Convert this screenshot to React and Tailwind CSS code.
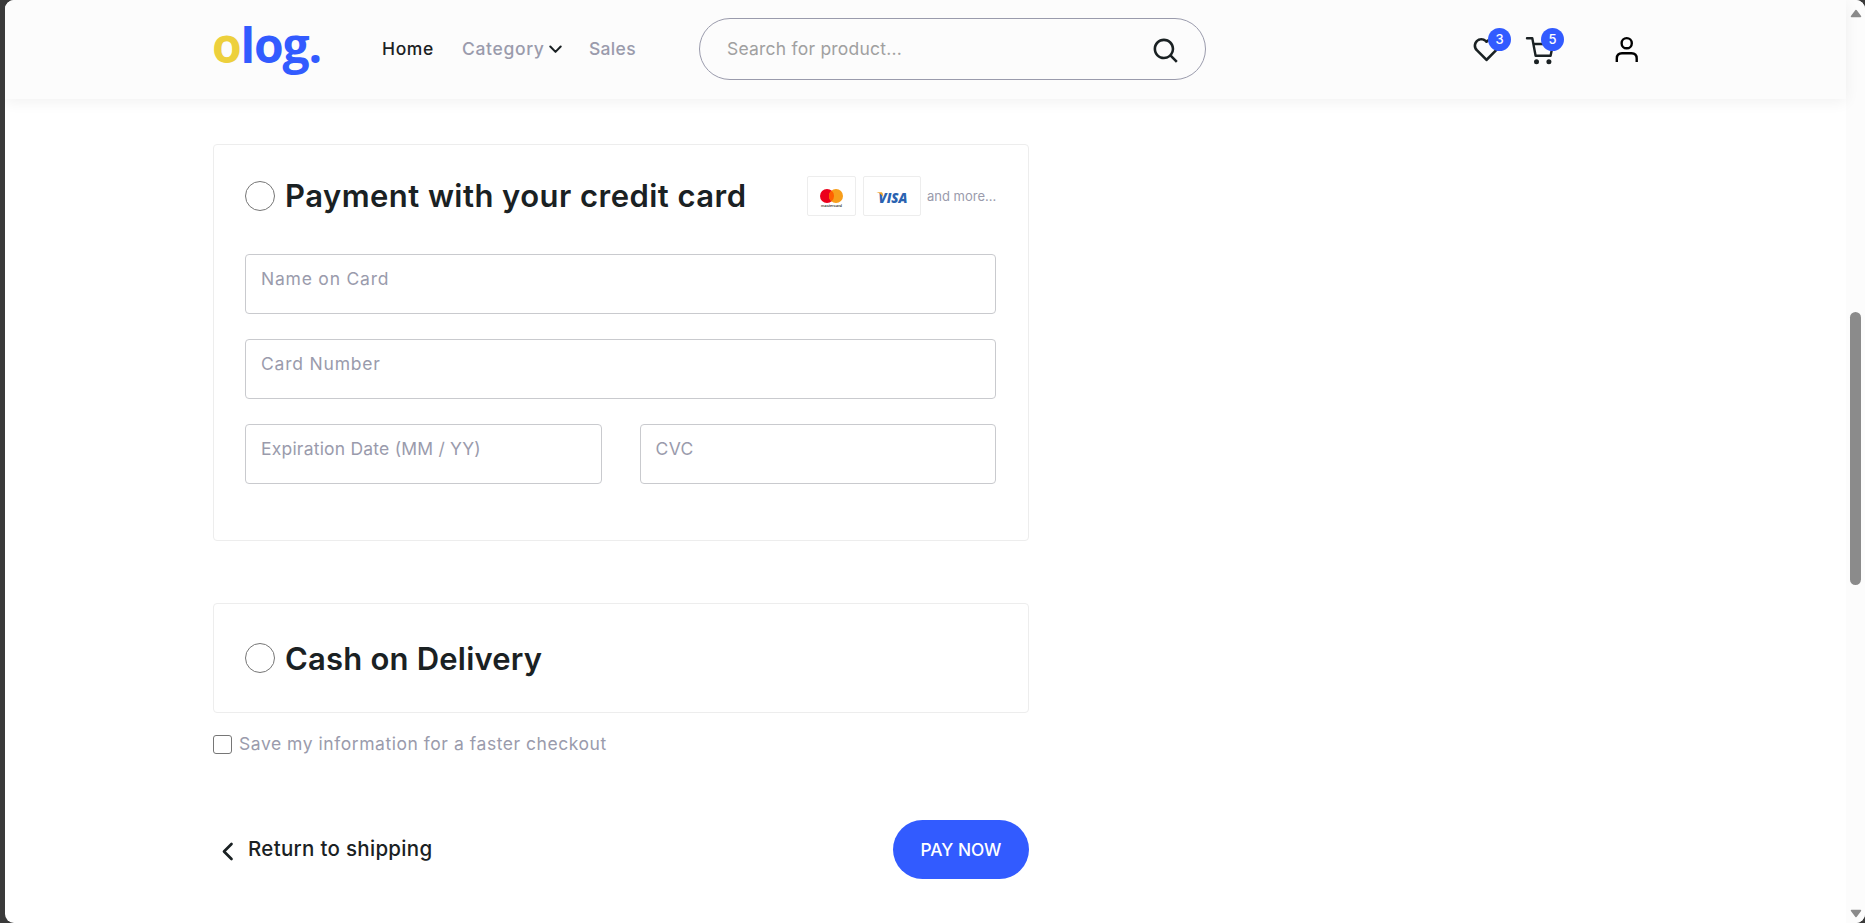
import { BiSearch, BiHeart } from 'react-icons/bi';

function CartIcon() {
  return (
    <svg width="31" height="31" viewBox="0 0 31 31" fill="none" stroke="#1a2123" strokeWidth="2.400" strokeLinejoin="round" strokeLinecap="round">
      <path d="M3 4.200H8.300L11.600 21.700H26.600L29 10H9.500" />
      <circle cx="12.500" cy="27.700" r="2.500" fill="#1a2123" stroke="none" />
      <circle cx="24.900" cy="27.700" r="2.500" fill="#1a2123" stroke="none" />
    </svg>
  );
}

function UserIcon() {
  return (
    <svg width="30" height="31" viewBox="0 0 30 31" fill="none" stroke="#000" strokeWidth="2.400">
      <circle cx="14.700" cy="9.200" r="5.100" />
      <path d="M4.800 28V24.500Q4.800 19.200 10 19.200H19.500Q24.700 19.200 24.700 24.500V28" />
    </svg>
  );
}

function Header() {
  return (
    <header className="relative z-10 flex h-[99px] shrink-0 items-center bg-[#fcfcfc] pl-[207px] pr-[204px] shadow-[0_3px_14px_rgba(0,0,0,0.06)]">
      <a className="w-[107px] pb-[9px] font-['Open_Sans',sans-serif] text-[48px] leading-[60px] font-bold tracking-[-1.2px] text-[#325bff]">
        <span className="text-[#edd03c]">o</span>log.
      </a>
      <nav className="ml-[63px] flex items-center pb-[2px] text-[17.5px] leading-6 font-medium text-[#9a9bac]">
        <a className="w-[80px] tracking-[0.6px] text-[#1a2123]">Home</a>
        <a className="flex w-[127px] items-center tracking-[0.65px]">
          Category
          <svg className="mt-[2px] ml-[4px] shrink-0" width="13" height="9" viewBox="0 0 13 9" fill="none">
            <path d="M1.3 1.500L6.500 6.900L11.700 1.500" stroke="#1a2123" strokeWidth="2" strokeLinecap="round" strokeLinejoin="round" />
          </svg>
        </a>
        <a className="w-[110px] tracking-[0.3px]">Sales</a>
      </nav>
      <div className="mb-[1px] flex h-[62px] w-[507px] items-center justify-between rounded-full border border-[#9a9bac] pr-[23px] pl-[27px]">
        <span className="pt-[1px] text-[17.5px] tracking-[0.22px] text-[#a0a0a0]">Search for product...</span>
        <BiSearch className="mt-[4px] text-[31px] text-[#1a2123]" />
      </div>
      <div className="ml-auto flex items-center text-[31px] text-[#1a2123]">
        <span className="relative mr-[22px]">
          <BiHeart />
          <Badge>3</Badge>
        </span>
        <span className="relative mr-[57px]">
          <CartIcon />
          <Badge>5</Badge>
        </span>
        <UserIcon />
      </div>
    </header>
  );
}

function Badge({ children }) {
  return (
    <span className="absolute -top-[6px] left-[17px] flex size-[23px] items-center justify-center rounded-full bg-[#325bff] text-[13px] font-medium text-white">
      {children}
    </span>
  );
}

function Radio() {
  return <span className="mr-[10px] size-[30px] shrink-0 rounded-full border border-[#767676]" />;
}

function Field({ label, className = '' }) {
  return (
    <div className={`h-[60px] flex-1 rounded-[4px] border border-[#c9cace] pt-[12px] pl-[15px] text-[17.5px] leading-6 text-[#9a9bac] ${className}`}>
      {label}
    </div>
  );
}

function CardLogos() {
  return (
    <div className="-mr-[1px] ml-auto flex items-center">
      <div className="flex h-10 w-[49px] items-center justify-center rounded-[2px] border border-[#ededed]">
        <svg width="25" height="24" viewBox="0 0 25 24">
          <circle cx="8" cy="12" r="7" fill="#eb001b" />
          <circle cx="17" cy="12" r="7" fill="#f79e1b" />
          <path d="M12.5 6.600a7 7 0 0 1 0 10.800a7 7 0 0 1 0-10.800z" fill="#ff5f00" />
          <text x="2" y="22.600" textLength="21" lengthAdjust="spacingAndGlyphs" fontSize="3.600" fontWeight="500" fontFamily="Inter" fill="#231f20">mastercard</text>
        </svg>
      </div>
      <div className="ml-[7px] flex h-10 w-[58px] items-center justify-center rounded-[2px] border border-[#ededed]">
        <svg className="mt-[2px] shrink-0" width="38" height="20" viewBox="0 0 38 20">
          <text x="5.500" y="15.500" textLength="29" lengthAdjust="spacingAndGlyphs" fontSize="14" fontWeight="800" fontStyle="italic" fontFamily="Open Sans" fill="#2a62b0">VISA</text>
          <path d="M3.500 5.300h4.500c1 0 1.400.4 1.600 1.200l.8 3.800C9 7.800 6.500 6.100 3.500 5.300z" fill="#f0a328" />
        </svg>
      </div>
      <span className="ml-[6px] w-[70px] pt-[1px] text-[13px] whitespace-nowrap text-[#9a9bac]">and more...</span>
    </div>
  );
}

function Scrollbar() {
  return (
    <div className="flex w-[19px] shrink-0 flex-col items-center bg-[#fcfcfc]">
      <svg className="mt-[9px]" width="12" height="9" viewBox="0 0 12 9">
        <path d="M6 1.500L10.500 7.500H1.500z" fill="#8b8b8b" stroke="#8b8b8b" strokeWidth="1.500" strokeLinejoin="round" />
      </svg>
      <div className="mt-[294px] h-[273px] w-[11px] rounded-full bg-[#8b8b8b]" />
      <svg className="mt-auto mb-[5px]" width="12" height="9" viewBox="0 0 12 9">
        <path d="M6 7.500L10.500 1.500H1.500z" fill="#8b8b8b" stroke="#8b8b8b" strokeWidth="1.500" strokeLinejoin="round" />
      </svg>
    </div>
  );
}

export default function App() {
  return (
    <div className="h-[923px] bg-[#3a3a3a] pl-[5px] font-['Inter',sans-serif] text-[#1a2123]">
      <div className="flex h-full overflow-hidden rounded-[9px] bg-white">
        <div className="flex min-w-0 flex-1 flex-col">
          <Header />
          <main className="ml-[208px] flex w-[816px] flex-col pt-[45px]">
            <section className="rounded-[4px] border border-[#ededed] pt-[31px] pr-[32px] pb-[56px] pl-[31px]">
              <div className="flex h-10 items-center">
                <Radio />
                <h2 className="pb-[1px] text-[31px] leading-[39px] font-semibold tracking-[0.46px] whitespace-nowrap">Payment with your credit card</h2>
                <CardLogos />
              </div>
              <div className="mt-[38px] flex flex-col gap-[25px]">
                <div className="flex"><Field label="Name on Card" className="tracking-[0.78px]" /></div>
                <div className="flex"><Field label="Card Number" className="tracking-[0.8px]" /></div>
                <div className="flex gap-[38px]">
                  <Field label="Expiration Date (MM / YY)" className="tracking-[0.21px]" />
                  <Field label="CVC" className="tracking-[0.35px]" />
                </div>
              </div>
            </section>
            <section className="mt-[62px] flex h-[110px] items-center rounded-[4px] border border-[#ededed] px-[31px]">
              <Radio />
              <h2 className="pt-[1px] text-[31px] leading-10 font-semibold tracking-[0.2px]">Cash on Delivery</h2>
            </section>
            <label className="mt-[16px] flex h-[30px] items-center text-[17.5px] tracking-[0.54px] text-[#9a9bac]">
              <span className="mr-[7px] size-[19px] rounded-[3px] border-[1.5px] border-[#767676]" />
              <span className="pt-[1px]">Save my information for a faster checkout</span>
            </label>
            <div className="mt-[61px] flex h-[59px] items-center justify-between">
              <a className="flex items-center text-[20.5px] font-medium tracking-[0.3px]">
                <svg className="mt-[3px] mr-[14px] ml-[8px]" width="13" height="19" viewBox="0 0 13 19" fill="none">
                  <path d="M10.500 2L3 9.500L10.500 17" stroke="#1a2123" strokeWidth="2.700" strokeLinecap="round" strokeLinejoin="round" />
                </svg>
                Return to shipping
              </a>
              <button className="h-[59px] w-[136px] rounded-full bg-[#325bff] text-[17.3px] font-medium text-white">PAY NOW</button>
            </div>
          </main>
        </div>
        <Scrollbar />
      </div>
    </div>
  );
}
